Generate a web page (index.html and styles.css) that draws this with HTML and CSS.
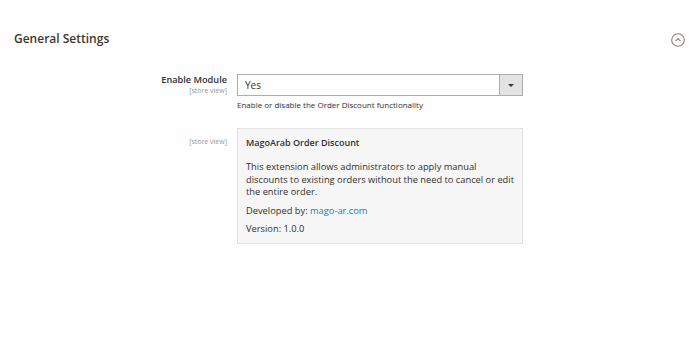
FILE: index.html
```html
<!DOCTYPE html>
<html>
<head>
<meta charset="utf-8">
<link rel="stylesheet" href="styles.css">
</head>
<body>
<div class="page">
  <div class="section-head">
    <h2 class="section-title">General Settings</h2>
    <span class="collapse-icon">
      <svg width="16" height="16" viewBox="0 0 16 16"><circle cx="8" cy="8" r="6.3" fill="none" stroke="#8a837e" stroke-width="1.1"/><path d="M5.4 9.1 L8 6.6 L10.6 9.1" fill="none" stroke="#8a837e" stroke-width="1.1"/></svg>
    </span>
  </div>
  <div class="form">
    <div class="row">
      <div class="label">
        <span class="label-text">Enable Module</span>
        <span class="scope">[store view]</span>
      </div>
      <div class="control">
        <div class="select">
          <span class="select-value">Yes</span>
          <span class="select-btn"><span class="tri"></span></span>
        </div>
        <div class="note">Enable or disable the Order Discount functionality</div>
      </div>
    </div>
    <div class="row row-info">
      <div class="label">
        <span class="scope">[store view]</span>
      </div>
      <div class="control">
        <div class="info">
          <div class="info-title">MagoArab Order Discount</div>
          <p class="info-text">This extension allows administrators to apply manual discounts to existing orders without the need to cancel or edit the entire order.</p>
          <p class="info-line">Developed by: <a class="link" href="#">mago-ar.com</a></p>
          <p class="info-line">Version: 1.0.0</p>
        </div>
      </div>
    </div>
  </div>
</div>
</body>
</html>
```

FILE: styles.css
```css
html, body {
  margin: 0;
  padding: 0;
  background: #fefefe;
}
body {
  font-family: "Open Sans", "Liberation Sans", sans-serif;
  color: #303030;
  width: 700px;
  height: 355px;
  overflow: hidden;
}
.page {
  padding-top: 30px;
}
.section-head {
  display: flex;
  justify-content: space-between;
  align-items: center;
  padding: 0 14px 0 14px;
  height: 20px;
}
.section-title {
  margin: 0;
  margin-top: -3px;
  font-size: 12px;
  font-weight: 600;
  color: #41362f;
}
.collapse-icon {
  display: flex;
}
.form {
  padding-top: 24px;
}
.row {
  display: grid;
  grid-template-columns: 227px 286px;
  column-gap: 10px;
}
.row-info {
  margin-top: 18px;
}
.label {
  display: flex;
  flex-direction: column;
  align-items: flex-end;
  text-align: right;
}
.label-text {
  font-size: 9.2px;
  font-weight: 600;
  color: #303030;
  line-height: 12px;
  margin-top: 0;
}
.scope {
  font-size: 7px;
  color: #999;
  line-height: 10px;
}
.row-info .scope {
  margin-top: 9px;
}
.select {
  display: flex;
  height: 22px;
  box-sizing: border-box;
  border: 1px solid #adadad;
  background: #fff;
}
.select-value {
  flex: 1;
  font-size: 10px;
  line-height: 20px;
  padding-left: 7px;
}
.select-btn {
  width: 22px;
  background: #e3e3e3;
  border-left: 1px solid #adadad;
  display: flex;
  align-items: center;
  justify-content: center;
}
.tri {
  width: 0;
  height: 0;
  border-left: 3px solid transparent;
  border-right: 3px solid transparent;
  border-top: 3px solid #41362f;
}
.note {
  font-size: 8px;
  line-height: 10px;
  margin-top: 4px;
  color: #303030;
}
.info {
  box-sizing: border-box;
  background: #f6f6f6;
  border: 1px solid #e3e3e3;
  padding: 8px 8px 9px 8px;
  height: 116px;
  font-size: 9.3px;
  color: #303030;
}
.info-title {
  font-weight: 600;
  font-size: 9px;
  line-height: 12px;
  color: #303030;
}
.info-text {
  margin: 12px 0 0 0;
  line-height: 12.7px;
}
.info-line {
  margin: 5.5px 0 0 0;
  line-height: 12.7px;
}
.link {
  color: #1979c3;
  text-decoration: none;
}
```
